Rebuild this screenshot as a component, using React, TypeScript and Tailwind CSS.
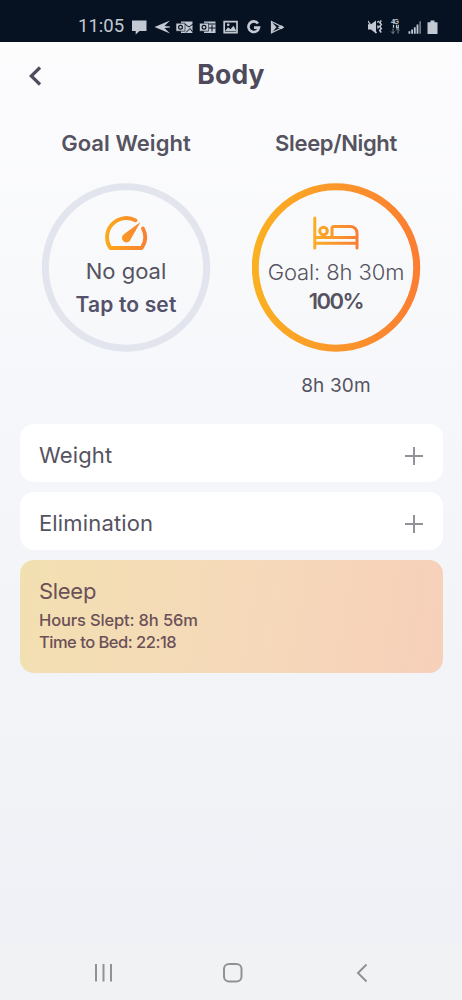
import type { ReactNode } from "react";

function StatusIcons() {
  return (
    <svg className="ml-[7px] h-4 w-[160px]" viewBox="0 0 160 16" fill="#c3c9d2">
      <path d="M1 1.500h14.500v10.500H8.500l-3.800 3.500V12H1z" />
      <path d="M23.500 8 39 1.500 33.500 7l5.500.6v.9l-5.500.6L39 14.500z" />
      <g>
        <path d="M50 2.500h11.500v11.500H50z" />
        <path d="m53 4.500 5 3.500 4-3M55 13.500l4-4 3 4" stroke="#061222" strokeWidth="1" fill="none" />
        <path d="M45 4.200h9v8h-9z" stroke="#061222" strokeWidth=".6" />
        <circle cx="49.500" cy="8.200" r="1.900" fill="none" stroke="#061222" strokeWidth="1.200" />
      </g>
      <g>
        <path d="M73 2.500h11.500v11.500H73z" />
        <path d="M76 5h8.500M78 9h6.500M81 6v6.500" stroke="#061222" strokeWidth="1" fill="none" />
        <path d="M68.500 4.200h9v8h-9z" stroke="#061222" strokeWidth=".6" />
        <circle cx="73" cy="8.200" r="1.900" fill="none" stroke="#061222" strokeWidth="1.200" />
      </g>
      <path d="M93.200 2.700h12.800v11H93.200z" fill="none" stroke="#c3c9d2" strokeWidth="1.700" />
      <path d="m94 12.200 3-4 2.500 2 3-3.500 3 5.500z" />
      <circle cx="97.200" cy="5.700" r="1.300" />
      <path d="M127 4.500A5.300 5.300 0 1 0 128 8.600H123" fill="none" stroke="#c3c9d2" strokeWidth="2.600" />
      <path d="m140.500 2.500 11.500 5.700-11.500 5.700z" fill="none" stroke="#c3c9d2" strokeWidth="1.200" />
      <path d="m140 2 5.500 6.200-5.500 6.200zM146.500 8.200l4-2 2.500 2-2.500 2z" />
    </svg>
  );
}

function SignalIcons() {
  return (
    <svg className="h-4 w-[72px]" viewBox="0 0 72 16" fill="#c3c9d2">
      <path d="M-.5 5.200h3.500L8 1.500v13l-5-4H-.5z" />
      <path d="M-.3 1.800 8.500 14M9.300 3.500l1.500-1.500" fill="none" stroke="#c3c9d2" strokeWidth="1.300" />
      <path d="m13.300 1.500-1.600 2 1.600 2-1.600 2 1.600 2-1.600 2 1.600 2M9.500 6.500l.8 1.500-.8 1.500" fill="none" stroke="#c3c9d2" strokeWidth="1.500" />
      <text x="23" y="5.200" fontSize="7" fontWeight="700" fontFamily="Liberation Sans, sans-serif" textLength="8">4G</text>
      <path d="M25.500 5.800v3M28.500 5.800v3h1.800v-3" fill="none" stroke="#c3c9d2" strokeWidth="1.200" />
      <path d="M25 9.500v5m-2-2 2 2 1.500-2M30 14.500v-5m-2 2 2-2 1.500 2" fill="none" stroke="#7b8491" strokeWidth="1" />
      <path d="M40.500 12.200h1.800v2.500h-1.800zM43.200 10.500H45v4.200h-1.800zM45.900 8.200h1.800v6.500h-1.800zM48.600 5.500h1.800v9.200h-1.800z" />
      <path d="M51.300 2.200H53v12.500h-1.700z" fill="#6e7784" />
      <path d="M59.500 3.200h3V1.600h4v1.600h3V15H59.500z" />
    </svg>
  );
}

function GaugeIcon() {
  return (
    <svg className="h-9 w-11" viewBox="0 0 44 36" fill="none">
      <defs>
        <linearGradient id="gauge" gradientUnits="userSpaceOnUse" x1="0" y1="0" x2="44" y2="0">
          <stop stopColor="#fbab18" />
          <stop offset="1" stopColor="#f97f33" />
        </linearGradient>
      </defs>
      <path d="M31.500 5.300A19.300 19.300 0 0 0 6.300 33h31.400A19.300 19.300 0 0 0 39 13.500" stroke="url(#gauge)" strokeWidth="3.800" strokeLinecap="round" strokeLinejoin="round" />
      <path d="M36.500 7 26.800 24a4.500 4.500 0 1 1-7.300-4.500z" fill="url(#gauge)" />
    </svg>
  );
}

function BedIcon() {
  return (
    <svg className="h-9 w-12" viewBox="0 0 48 36" fill="none" stroke="url(#bed)" strokeWidth="3" strokeLinecap="round">
      <defs>
        <linearGradient id="bed" gradientUnits="userSpaceOnUse" x1="0" y1="0" x2="48" y2="0">
          <stop stopColor="#fbb024" />
          <stop offset="1" stopColor="#f97b33" />
        </linearGradient>
      </defs>
      <path d="M2.800 3v30M3 22.500h42M3 28.300h42M45 33V18a6.500 6.500 0 0 0-6.500-6.500H22q-2 0-2 2v9" />
      <circle cx="11.500" cy="16" r="3.800" />
    </svg>
  );
}

function Ring({ full, children }: { full?: boolean; children: ReactNode }) {
  return (
    <div className="relative flex h-[169px] w-[169px] flex-col items-center pt-[32px]">
      <svg className="absolute inset-0 h-full w-full" viewBox="0 0 169 169" fill="none">
        <defs>
          <linearGradient id="ring" x1="0" y1="0" x2="1" y2="0">
            <stop stopColor="#fbb022" />
            <stop offset="1" stopColor="#fb7e32" />
          </linearGradient>
        </defs>
        <circle cx="84" cy="84.500" r="80.700" strokeWidth="7" stroke={full ? "url(#ring)" : "#e2e5ed"} />
      </svg>
      {children}
    </div>
  );
}

function AddCard({ title }: { title: string }) {
  return (
    <div className="flex h-[58px] items-center justify-between rounded-[14px] bg-white pr-[20px] pl-[19px]">
      <span className="pt-1 text-[22px] tracking-[0.15px]">{title}</span>
      <svg className="mt-[6px] h-[18px] w-[18px]" viewBox="0 0 18 18" stroke="#929299" strokeWidth="2">
        <path d="M0 9h18M9 0v18" />
      </svg>
    </div>
  );
}

export default function App() {
  return (
    <div className="flex h-[1000px] w-[462px] flex-col bg-gradient-to-b from-[#fdfdfe] via-[#f6f7fa] via-40% to-[#eff0f5] font-['Inter',sans-serif] text-[#55535f]">
      <div className="flex h-[42px] items-end bg-[#061222] pr-[22px] pb-[7px] pl-[78px]">
        <span className="font-['Roboto',sans-serif] text-[18.500px] leading-[17px] text-[#c3c9d2]">11:05</span>
        <StatusIcons />
        <div className="ml-auto">
          <SignalIcons />
        </div>
      </div>
      <header className="grid h-[68px] grid-cols-[1fr_auto_1fr] items-center px-[28px]">
        <svg className="h-5 w-[14px]" viewBox="0 0 14 20" fill="none" stroke="#4f4d5c" strokeWidth="3.200">
          <path d="M12 1.500 3.300 10l8.700 8.500" />
        </svg>
        <h1 className="-mt-[2px] text-[26.500px] font-bold tracking-[0.2px] text-[#4d4a5c]">Body</h1>
      </header>
      <div className="grid grid-cols-[210px_210px] justify-center">
        <section className="flex flex-col items-center">
          <h2 className="mt-[20px] mb-[27px] text-[22px] leading-[26px] font-semibold tracking-[0.05px]">Goal Weight</h2>
          <Ring>
            <GaugeIcon />
            <p className="text-[22px] leading-[40px]">No goal</p>
            <p className="text-[21px] leading-[28px] font-semibold tracking-[0.15px] text-[#54516a]">Tap to set</p>
          </Ring>
        </section>
        <section className="flex flex-col items-center">
          <h2 className="mt-[20px] mb-[27px] text-[22px] leading-[26px] font-semibold tracking-[-0.35px]">Sleep/Night</h2>
          <Ring full>
            <BedIcon />
            <p className="mt-px text-[22px] leading-[40px] font-light tracking-[-0.1px]">Goal: 8h 30m</p>
            <p className="-mt-px text-[22px] leading-[20px] font-semibold tracking-[-1.500px]">100%</p>
          </Ring>
          <p className="mt-[20px] text-[19px] leading-[28px] tracking-[0.15px]">8h 30m</p>
        </section>
      </div>
      <main className="mt-[24px] flex flex-col gap-[10px] pr-[19px] pl-[20px]">
        <AddCard title="Weight" />
        <AddCard title="Elimination" />
        <div className="h-[113px] rounded-[14px] bg-linear-100 from-[#f2e0b1] via-[#f5d9b9] to-[#f7d0ba] px-[19px] pt-[17px] text-[#6b5058]">
          <p className="text-[22px] leading-[28px] tracking-[-0.3px]">Sleep</p>
          <p className="mt-[4px] text-[16.500px] leading-[22px] font-medium tracking-[-0.150px]">Hours Slept: 8h 56m</p>
          <p className="text-[16.500px] leading-[22px] font-medium tracking-[-0.500px]">Time to Bed: 22:18</p>
        </div>
      </main>
      <nav className="mt-auto h-[56px] bg-[#f1f2f4]">
        <svg className="h-full w-full" viewBox="0 0 462 56" fill="none" stroke="#919195" strokeWidth="2">
          <path d="M96 20v17.500M103.500 20v17.500M111 20v17.500" />
          <rect x="224" y="20" width="17.500" height="17.500" rx="5" />
          <path d="m366.500 20.500-8.500 8.500 8.500 8.500" />
        </svg>
      </nav>
    </div>
  );
}
